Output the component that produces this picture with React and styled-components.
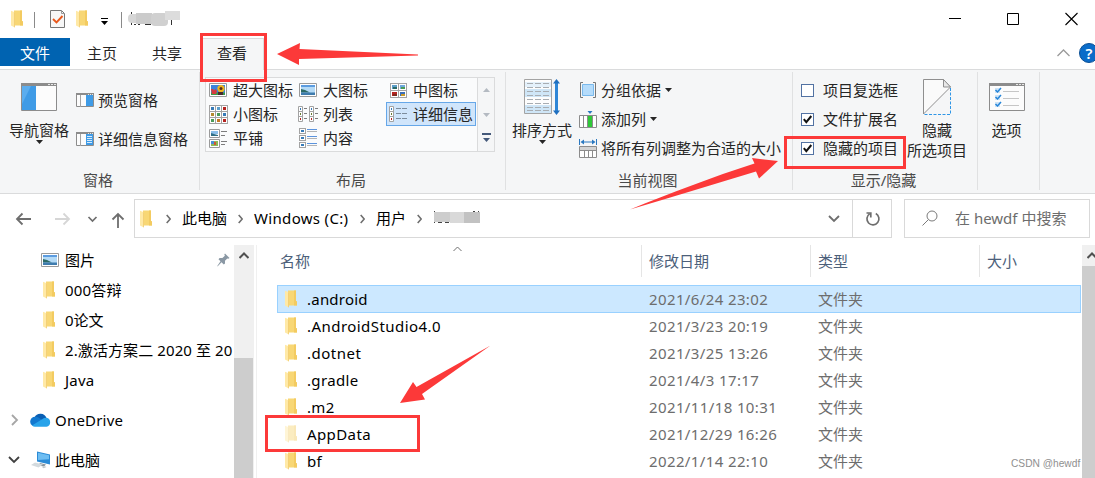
import styled, { createGlobalStyle, css } from 'styled-components';

const GlobalStyle = createGlobalStyle`
  * {
    box-sizing: border-box;
  }

  body {
    margin: 0;
    background: #fff;
    overflow: hidden;
  }

  svg {
    display: block;
    flex: none;
  }
`;

const Window = styled.div`
  position: relative;
  width: 1095px;
  height: 478px;
  overflow: hidden;
  display: flex;
  flex-direction: column;
  background: #fff;
  color: #000;
  font-family: 'Noto Sans', 'Noto Sans CJK SC', sans-serif;
  font-size: 15px;
  line-height: 20px;
  white-space: nowrap;
`;

/* ---------- title bar ---------- */

const TitleBar = styled.header`
  height: 38px;
  flex: none;
  display: flex;
  justify-content: space-between;
`;

const QuickAccess = styled.div`
  display: flex;
  align-items: center;
  padding-left: 11px;
`;

const TitleRule = styled.i`
  width: 1px;
  height: 16px;
  margin: 1px ${(p) => p.$right}px 0 ${(p) => p.$left}px;
  background: #8a8a8a;
`;

const QuickFolder = styled.span`
  margin: 0 13px 0 11px;
`;

const QuickCaret = styled.span`
  margin: 5px 13px 0 0;
`;

const WindowButtons = styled.div`
  display: flex;
  gap: 45px;
  padding: 12px 17px 0 0;
`;

/* ---------- tabs ---------- */

const TabBar = styled.nav`
  height: 32px;
  flex: none;
  display: flex;
  border-bottom: 1px solid #dadbdc;
`;

const Tab = styled.div`
  width: ${(p) => p.$width}px;
  height: 28px;
  padding-top: 1px;
  display: flex;
  align-items: center;
  justify-content: center;
  color: #262626;

  ${(p) => p.$file && css`
    background: #0063b1;
    color: #fff;
  `}

  ${(p) => p.$active && css`
    height: 32px;
    padding-bottom: 4px;
    background: #f5f6f7;
    border: 1px solid #dadbdc;
    border-bottom: 0;
  `}
`;

const TabTools = styled.div`
  margin-left: auto;
  margin-right: -4px;
  padding-bottom: 1px;
  display: flex;
  align-items: center;
  gap: 9px;
`;

/* ---------- ribbon ---------- */

const Ribbon = styled.section`
  height: 124px;
  flex: none;
  display: flex;
  background: #f5f6f7;
  border-bottom: 1px solid #dadbdc;
  color: #262626;
`;

const Group = styled.div`
  width: ${(p) => p.$width}px;
  height: 118px;
  margin-top: 2px;
  display: flex;
  flex-direction: column;
  border-right: 1px solid #e0e1e2;
`;

const GroupBody = styled.div`
  height: 98px;
  display: flex;
  align-items: flex-start;
  padding-left: ${(p) => p.$left}px;
`;

const GroupLabel = styled.div`
  text-align: center;
  padding-right: 3px;
  color: #4a4a4a;
`;

const BigButton = styled.div`
  width: ${(p) => p.$width || 60}px;
  height: 90px;
  margin-left: ${(p) => p.$left || 0}px;
  display: flex;
  flex-direction: column;
  align-items: center;
`;

const BigIcon = styled.div`
  height: 48px;
  display: flex;
  padding-top: ${(p) => p.$top}px;
`;

const Stack = styled.div`
  display: flex;
  flex-direction: column;
  gap: ${(p) => p.$gap}px;
  margin-left: ${(p) => p.$left}px;
  padding-top: ${(p) => p.$top}px;
`;

const Command = styled.div`
  height: 20px;
  display: flex;
  align-items: center;
  gap: 4px;
`;

const Gallery = styled.div`
  display: flex;
  width: 291px;
  height: 75px;
  margin-top: 5px;
`;

const GalleryGrid = styled.div`
  width: 272px;
  display: grid;
  grid-template-columns: 90px 90px 90px;
  grid-auto-rows: 24px;
  background: #fafbfc;
  border: 1px solid #dadbdc;
  border-right: 0;
`;

const GalleryItem = styled.div`
  display: flex;
  align-items: center;
  gap: 6px;
  padding-left: 2px;
  border: 1px solid ${(p) => (p.$selected ? '#66a7e8' : 'transparent')};
  background: ${(p) => (p.$selected ? '#d0e5fb' : 'transparent')};
`;

const IconSlot = styled.span`
  width: 18px;
  height: 20px;
  display: flex;
  align-items: center;
  justify-content: center;
`;

const GallerySpin = styled.div`
  width: 18px;
  border: 1px solid #dadbdc;
`;

const CheckRow = styled.label`
  display: flex;
  align-items: center;
  gap: 9px;
  height: 20px;
`;

const CheckBox = styled.span`
  width: 13px;
  height: 13px;
  border: 1px solid #5272a3;
  background: #fff;
`;

/* ---------- address row ---------- */

const AddressRow = styled.div`
  height: 51px;
  flex: none;
  padding-top: 5px;
  display: flex;
`;

const NavButtons = styled.div`
  width: 134px;
  height: 39px;
`;

const AddressBox = styled.div`
  width: 758px;
  height: 39px;
  display: flex;
  align-items: center;
  border: 1px solid #d9d9d9;
  padding-left: 5px;
`;

const BoxFolder = styled.span`
  margin-right: 14px;
`;

const Crumb = styled.span`
  width: ${(p) => p.$width}px;
  margin: 0 11px;
  padding-bottom: 1px;
  letter-spacing: ${(p) => p.$spacing || 0}px;
`;

const RefreshCell = styled.div`
  width: 39px;
  height: 37px;
  border-left: 1px solid #d9d9d9;
  padding: 11px 0 0 12px;
`;

const DropCell = styled.div`
  margin-left: auto;
  margin-right: 12px;
`;

const SearchBox = styled.div`
  width: 186px;
  height: 39px;
  margin-left: 12px;
  padding: 0 0 1px 17px;
  display: flex;
  align-items: center;
  gap: 17px;
  border: 1px solid #d9d9d9;
  color: #6d6d6d;
`;

/* ---------- body ---------- */

const Body = styled.main`
  flex: 1;
  display: flex;
  min-height: 0;
`;

const Sidebar = styled.aside`
  width: 234px;
  flex: none;
`;

const TreeRow = styled.div`
  height: 30px;
  margin-top: ${(p) => p.$top || 0}px;
  padding-left: ${(p) => p.$left}px;
  display: flex;
  align-items: center;
  letter-spacing: ${(p) => p.$spacing || 0}px;
`;

const TreeIcon = styled.span`
  width: ${(p) => p.$width}px;
  flex: none;
  display: flex;
`;

const Pin = styled.span`
  margin-left: auto;
  margin-right: 4px;
`;

const Scroll = styled.div`
  width: ${(p) => p.$width}px;
  flex: none;
  height: 100%;
  display: flex;
  flex-direction: column;
  background: #f0f0f0;
`;

const ScrollHead = styled.div`
  height: ${(p) => p.$height}px;
  padding: 7px 0 0 ${(p) => p.$left}px;
`;

const Thumb = styled.div`
  flex: 1;
  margin-right: ${(p) => p.$right || 0}px;
  background: #cdcdcd;
`;

const Files = styled.section`
  width: 826px;
  margin-left: 2px;
  border-left: 1px solid #f0f0f0;
  padding-left: 20px;
`;

const columns = css`
  display: grid;
  grid-template-columns: 365px 169px 169px 1fr;
`;

const HeaderRow = styled.div`
  ${columns}
  height: 32px;
  margin-bottom: 8px;
  color: #4c607a;
`;

const HeaderCell = styled.div`
  border-right: ${(p) => (p.$last ? 0 : 1)}px solid #e5e5e5;
  padding: 6px 0 0 ${(p) => p.$left}px;
  position: relative;
`;

const SortMark = styled.span`
  position: absolute;
  left: 176px;
  top: 1px;
`;

const FileRow = styled.div`
  ${columns}
  width: 804px;
  height: 27px;
  align-items: center;
  color: #6d6d6d;

  ${(p) => p.$selected && css`
    height: 28px;
    margin-bottom: -1px;
    background: #cce8ff;
    box-shadow: inset 0 0 0 1px #99d1ff;
  `}
`;

const FileName = styled.div`
  display: flex;
  align-items: center;
  gap: 10px;
  padding-left: 8px;
  color: #000;
  letter-spacing: ${(p) => p.$spacing}px;
`;

const Cell = styled.div`
  padding-left: 7px;
  letter-spacing: ${(p) => p.$spacing || 0}px;
`;

const Watermark = styled.div`
  position: absolute;
  left: 1011px;
  top: 456px;
  font: 10.2px/16px 'Liberation Sans', sans-serif;
  color: #8f8f8f;
`;

const Mark = styled.div`
  position: absolute;
  left: ${(p) => p.$x}px;
  top: ${(p) => p.$y}px;
  width: ${(p) => p.$w}px;
  height: ${(p) => p.$h}px;
  border: 3px solid #fc3939;
`;

const Arrows = styled.svg`
  position: absolute;
  left: 0;
  top: 0;
`;

/* ---------- icons ---------- */

const FolderIcon = ({ faded }) => (
  <svg width="12" height="18" viewBox="0 0 12 18" opacity={faded ? 0.45 : 1}>
    <path d="M3 0.5h8v10.5l1 .5v4H3z" fill="#f8d775" />
    <path d="M9 0.5h2v10.5l1 .5v4H9z" fill="#f3cb61" />
    <path d="M0 .8l3.8 1.4v15.3L0 15.6z" fill="#ffe9a6" />
    <path d="M3.3 2.2h.7v15h-.7z" fill="#eec868" />
  </svg>
);

const Chevron = ({ d, w, h, color = '#6e6e6e', sw = 1.6 }) => (
  <svg width={w} height={h} viewBox={`0 0 ${w} ${h}`} fill="none" stroke={color} strokeWidth={sw}>
    <path d={d} />
  </svg>
);

const CrumbArrow = () => <Chevron w={5} h={10} d="M.7 1l3.5 4L.7 9" />;

const Caret = () => (
  <svg width="7" height="4" viewBox="0 0 7 4">
    <path d="M0 0h7L3.5 4z" fill="#262626" />
  </svg>
);

const NavPaneIcon = () => (
  <svg width="36" height="28" viewBox="0 0 36 28">
    <path d="M.5.5h35v27H.5z" fill="#fcfcfc" stroke="#8c8c8c" />
    <path d="M0 0h36v3H0z" fill="#8c8c8c" />
    <path d="M27 1h2v1h-2zM30 1h2v1h-2zM33 1h2v1h-2z" fill="#e8e8e8" />
    <path d="M1 3h14v24H1z" fill="#3f9be6" />
    <path d="M1 3h9L1 21z" fill="#5badee" />
  </svg>
);

const PaneIcon = ({ details }) => (
  <svg width="18" height="14" viewBox="0 0 18 14">
    <path d="M.5.5h17v13H.5z" fill="#fcfcfc" stroke="#8c8c8c" />
    <path d="M0 0h18v2H0z" fill="#8c8c8c" />
    <path d="M12 1h1v1h-1zM14 1h1v1h-1zM16 1h1v1h-1z" fill="#e8e8e8" />
    <path d="M4.5 2v12" stroke="#a4a4a4" />
    <path d="M10 2h7v11h-7z" fill="#3f9be6" />
    {details && <path d="M11 4.5h5M11 6.5h5M11 8.5h5M11 10.5h5" stroke="#e6f3fd" strokeWidth=".9" />}
  </svg>
);

const PictureIcon = () => (
  <svg width="18" height="14" viewBox="0 0 18 14">
    <path d="M.5.5h17v13H.5z" fill="#fff" stroke="#9a9a9a" />
    <path d="M2 2h14v10H2z" fill="#b4daf6" />
    <path d="M2 2h14v2H2z" fill="#5c9ce0" />
    <path d="M2 6l4 1 5 2.500H2z" fill="#2c6a66" />
    <path d="M2 9.500h14V12H2z" fill="#3f7cae" />
  </svg>
);

const ExtraLargeIcon = () => (
  <svg width="18" height="14" viewBox="0 0 18 14">
    <path d="M.5.5h17v13H.5z" fill="#fff" stroke="#9a9a9a" />
    <path d="M2 2h14v10H2z" fill="#3c83dc" />
    <path d="M2 9.5h14V12H2z" fill="#3c9a48" />
    <circle cx="12" cy="5.6" r="3.6" fill="#f0b51d" />
    <circle cx="12" cy="5.6" r="1.5" fill="#532c1a" />
    <path d="M2 6h2l1 1.5L6.5 6 8 8l-1 3H3z" fill="#d83a3c" />
    <path d="M9 9h5v3H9z" fill="#472a30" />
  </svg>
);

/* small framed thumbnails used by the icon layouts */
const thumbColors = ['#377bb8', '#5c9ec9', '#b52320', '#b38a2e', '#4a9b58', '#377bb8', '#4a9b58', '#c47721', '#b52320'];
const mediumColors = ['#5c9ec9', '#6fa8dd', '#b52320', '#3c6fb8'];
const mediumAccents = ['#2c6a66', '#4a9b58', '#7d2a1e', '#c99a2a'];

const MediumIcon = () => (
  <svg width="17" height="15" viewBox="0 0 17 15">
    {mediumColors.map((color, i) => {
      const x = (i % 2) * 8;
      const y = Math.floor(i / 2) * 7;
      return (
        <g key={color}>
          <rect x={x + 0.5} y={y + 0.5} width="8" height="7" fill="#fff" stroke="#a3a3a3" />
          <rect x={x + 2} y={y + 2} width="5" height="4" fill={color} />
          <rect x={x + 3} y={y + 4} width="4" height="2" fill={mediumAccents[i]} />
        </g>
      );
    })}
  </svg>
);

const SmallIcon = () => (
  <svg width="19" height="19" viewBox="0 0 19 19">
    {thumbColors.map((color, i) => {
      const x = (i % 3) * 6;
      const y = Math.floor(i / 3) * 6;
      return (
        <g key={i}>
          <rect x={x + 0.5} y={y + 0.5} width="6" height="6" fill="#fff" stroke="#a3a3a3" />
          <rect x={x + 2} y={y + 2} width="3" height="3" fill={color} />
        </g>
      );
    })}
  </svg>
);

const DotColumn = ({ x }) => (
  <g>
    <path d={`M${x + 0.5}.5h4v15h-4zM${x} 5.5h5M${x} 10.5h5`} fill="#fff" stroke="#a3a3a3" />
    <path d={`M${x + 2} 2h1v2h-1z`} fill="#377bb8" />
    <path d={`M${x + 2} 7h1v2h-1z`} fill="#6b7d33" />
    <path d={`M${x + 2} 12h1v2h-1z`} fill="#b52320" />
  </g>
);

const ListIcon = () => (
  <svg width="20" height="16" viewBox="0 0 20 16">
    <DotColumn x={0} />
    <DotColumn x={11} />
    <path d="M6 2.500h3M6 7.500h3M6 12.500h3M17 2.500h3M17 7.500h3M17 12.500h3" stroke="#7d7d7d" />
  </svg>
);

const DetailsIcon = () => (
  <svg width="18" height="16" viewBox="0 0 18 16">
    <DotColumn x={0} />
    <path d="M7 2.500h5M13 2.500h5M7 7.500h5M13 7.500h5M7 12.500h5M13 12.500h5" stroke="#7d8c9c" />
  </svg>
);

const TilesIcon = () => (
  <svg width="18" height="19" viewBox="0 0 18 19">
    <path d="M.5.5h10v8H.5zM.5 10.5h10v8H.5z" fill="#fff" stroke="#9a9a9a" />
    <path d="M2 2h7v3H2z" fill="#8bbfea" />
    <path d="M2 4l3 1 4 1v1H2z" fill="#2f6f86" />
    <path d="M2 12h7v5H2z" fill="#8cba58" />
    <path d="M2 12h3v3H2z" fill="#4a8fd8" />
    <path d="M5 13h2v3H5z" fill="#cf5936" />
    <path d="M12 2.5h6M12 6.5h4M12 12.5h6M12 15.5h4" stroke="#7d7d7d" />
  </svg>
);

const ContentIcon = () => (
  <svg width="18" height="20" viewBox="0 0 18 20">
    {[0, 7, 14].map((y) => (
      <g key={y}>
        <rect x=".5" y={y + 0.5} width="6" height="5" fill="#fff" stroke="#a3a3a3" />
        <rect x="2" y={y + 2} width="3" height="2" fill="#377bb8" />
        <path d={`M8 ${y + 1.5}h10`} stroke="#5b93dd" />
        <path d={`M8 ${y + 3.5}h10`} stroke="#b4b4b4" />
      </g>
    ))}
  </svg>
);

const SortIcon = () => (
  <svg width="36" height="36" viewBox="0 0 36 36">
    <path d="M.5.5h27v34H.5z" fill="#fdfdfd" stroke="#a3a3a3" />
    <path d="M1 10h26v8H1zM1 26h26v8H1z" fill="#cfe6f7" />
    <path d="M1 3h26v5H1z" fill="#e4f1fb" />
    {[4, 8, 12, 16, 20, 24, 28, 31].map((y) => (
      <path key={y} d={`M3 ${y + 0.5}h6M11 ${y + 0.5}h6M19 ${y + 0.5}h6`} stroke="#a8adb2" />
    ))}
    <path d="M32.5 3v30" stroke="#2f86d6" strokeWidth="3" />
    <path d="M29 4.5L32.5 0 36 4.5zM29 31.5l3.5 4.5 3.5-4.5z" fill="#1f6fbf" />
  </svg>
);

const GroupByIcon = () => (
  <svg width="18" height="16" viewBox="0 0 18 16">
    <path d="M4 .5H1.5v15H4M14 .5h2.500v15H14" fill="none" stroke="#777" />
    <path d="M3.500 2.500h11v11h-11z" fill="#b5dcfb" stroke="#79b9ec" />
  </svg>
);

const AddColumnIcon = () => (
  <svg width="18" height="17" viewBox="0 0 18 17">
    <path d="M.5 4.500h17v12H.5zM4.500 4v13M8.500 4v13M13.500 4v13" fill="#fff" stroke="#8c8c8c" />
    <path d="M9 5h4v11H9z" fill="#2fc838" />
    <path d="M8.500 0h5L11 3z" fill="#2a78c0" />
  </svg>
);

const FitColumnsIcon = () => (
  <svg width="18" height="19" viewBox="0 0 18 19">
    <path d="M.5 0v6M17.500 0v6M3 3h12" stroke="#2a78c0" />
    <path d="M1.500 3L5 .4v5.200zM16.500 3L13 .4v5.200z" fill="#2a78c0" />
    <path d="M.5 7.500h17v11H.5zM5.500 11v8M9.500 11v8M13.500 11v8" fill="#fff" stroke="#8c8c8c" />
    <path d="M1 8h16v3H1z" fill="#d2d2d2" />
    <path d="M0 11.500h18" stroke="#8c8c8c" />
  </svg>
);

const HideIcon = () => (
  <svg width="28" height="36" viewBox="0 0 28 36">
    <path d="M.5.5h20l7 7.500L.5 35z" fill="#fafafa" stroke="#8f8f8f" />
    <path d="M20.500.5v7.500h7z" fill="#e8e8e8" stroke="#8f8f8f" />
    <path d="M27.500 9v26.500H1" fill="none" stroke="#2f96e6" strokeDasharray="3 1.500" />
  </svg>
);

const OptionsIcon = () => (
  <svg width="36" height="28" viewBox="0 0 36 28">
    <path d="M.5.5h35v27H.5z" fill="#fcfcfc" stroke="#8c8c8c" />
    <path d="M0 0h36v3H0z" fill="#8c8c8c" />
    <path d="M27 1h2v1h-2zM30 1h2v1h-2zM33 1h2v1h-2z" fill="#e8e8e8" />
    {[5, 12, 19].map((y) => (
      <g key={y}>
        <rect x="6" y={y} width="5" height="5" fill="#cfe4f6" />
        <path d={`M6.500 ${y + 2}l2 2 3.500-4`} fill="none" stroke="#2585d8" strokeWidth="1.500" />
        <path d={`M14 ${y + 3.500}h16`} stroke="#c6c6c6" />
      </g>
    ))}
  </svg>
);

const CheckIcon = () => (
  <svg width="11" height="11" viewBox="0 0 11 11">
    <path d="M1.800 5.200l2.500 3 5-6.200" fill="none" stroke="#111" strokeWidth="2" />
  </svg>
);

const DocCheckIcon = () => (
  <svg width="15" height="18" viewBox="0 0 15 18">
    <path d="M.5.5h11l3 3v14H.5z" fill="#f7f7f7" stroke="#777" />
    <path d="M11.500.5v3h3" fill="none" stroke="#999" />
    <path d="M3 9l3.500 3.500L12.500 6" fill="none" stroke="#e8581c" strokeWidth="1.900" />
  </svg>
);

/* pixelated user name */
const TitleMosaic = () => (
  <svg width="54" height="17" viewBox="0 0 54 17">
    <path d="M3 1h1v2h-1zM3 11h1v3h-1z" fill="#333" />
    <path d="M6 13h2v1h-2zM10 13h2v1h-2zM17 13h6v1h-6zM43 8h1v6h-1z" fill="#333" />
    <rect x="0" y="3" width="14" height="9" rx="4" fill="#d6d6d6" />
    <rect x="8" y="2" width="16" height="11" fill="#cbcbcb" />
    <rect x="23" y="2" width="17" height="13" rx="4" fill="#d0d0d0" />
    <rect x="37" y="0" width="15" height="9" fill="#dcdcdc" />
  </svg>
);

const CrumbMosaic = () => (
  <svg width="48" height="14" viewBox="0 0 48 14">
    <path d="M1 0h1v2H1zM1 10h1v2H1zM5 11h4v1H5zM12 11h4v1h-4zM40 0h2v1h-2zM45 0h1v2h-1z" fill="#444" />
    <rect x="1" y="1" width="18" height="10" fill="#cdcdcd" />
    <rect x="17" y="1" width="15" height="11" fill="#d9d9d9" />
    <rect x="31" y="1" width="16" height="11" fill="#c2c2c2" />
  </svg>
);

const NavArrows = () => (
  <svg width="134" height="39" viewBox="0 0 134 39" fill="none" stroke="#6e6e6e" strokeWidth="1.800">
    <path d="M31 20H17M22.500 14.500L17 20l5.500 5.500" />
    <path d="M55 20h14M63.500 14.500L69 20l-5.500 5.500" stroke="#d6d6d6" />
    <path d="M88.500 18l4 4 4-4" strokeWidth="1.700" />
    <path d="M118 29V15M112.500 20.500L118 15l5.500 5.500" />
  </svg>
);

const RefreshIcon = () => (
  <svg width="16" height="16" viewBox="0 0 16 16" fill="none" stroke="#6e6e6e" strokeWidth="1.700">
    <path d="M10.800 2.600a6 6 0 1 1-6.200.3M1.500 2h4.300v4.500" />
  </svg>
);

const SearchIcon = () => (
  <svg width="16" height="16" viewBox="0 0 16 16" fill="none" stroke="#7a7a7a">
    <circle cx="10" cy="6" r="5" />
    <path d="M6.300 9.700L.5 15.500" />
  </svg>
);

const PinIcon = () => (
  <svg width="13" height="14" viewBox="0 0 13 14">
    <path d="M8 .5L12.500 5l-1.200.8-1-.3L8 7.800v2.700L6.800 11.600 4.500 9.300.5 13.500l-.2-.4L3.500 8.300 1.500 6.200 2.600 5h2.800l2.500-2.200-.6-1.200z" fill="#8a98a4" />
  </svg>
);

const OneDriveIcon = () => (
  <svg width="21" height="14" viewBox="0 0 21 14">
    <path d="M4.500 4.500A6.500 6.500 0 0 1 16.500 5L10 9z" fill="#0a5fb4" />
    <path d="M5 3.700a5 5 0 0 0-2.600 9.100L13 7.500 8.500 4.500A5 5 0 0 0 5 3.700z" fill="#1278cf" />
    <path d="M16.500 4.700a4.600 4.600 0 0 1 0 9H5a5 5 0 0 1-3-1.300L12.500 6a5 5 0 0 1 4-1.300z" fill="#28a3ea" />
  </svg>
);

const ComputerIcon = () => (
  <svg width="20" height="18" viewBox="0 0 20 18">
    <path d="M6 .5l13 3v10l-13-3z" fill="#2b8bd6" />
    <path d="M7 1.800l11 2.500v4L7 9z" fill="#6dbdf2" />
    <path d="M9 12l6 1.500-2 2-6-1z" fill="#8a959d" />
    <path d="M0 14l4-2.500 8 2L7.500 16.500z" fill="#d3dade" />
    <path d="M11 16l3-.8 1.500.8-3 1.200z" fill="#bfc8cd" />
  </svg>
);

const HelpIcon = () => (
  <svg width="20" height="20" viewBox="0 0 20 20">
    <circle cx="10" cy="10" r="9.500" fill="#0a6cc9" stroke="#0b4f94" />
    <text x="10" y="15.500" textAnchor="middle" fill="#fff" fontSize="15" fontWeight="600">?</text>
  </svg>
);

/* ---------- data ---------- */

const layouts = [
  { name: '超大图标', icon: <ExtraLargeIcon /> },
  { name: '大图标', icon: <PictureIcon /> },
  { name: '中图标', icon: <MediumIcon /> },
  { name: '小图标', icon: <SmallIcon /> },
  { name: '列表', icon: <ListIcon /> },
  { name: '详细信息', icon: <DetailsIcon />, selected: true },
  { name: '平铺', icon: <TilesIcon /> },
  { name: '内容', icon: <ContentIcon /> },
];

const folders = [
  { name: '000答辩', spacing: 0.2 },
  { name: '0论文' },
  { name: '2.激活方案二 2020 至 20', spacing: 0.1 },
  { name: 'Java', spacing: 0.2 },
];

const files = [
  { name: '.android', date: '2021/6/24 23:02', spacing: 0.22, selected: true },
  { name: '.AndroidStudio4.0', date: '2021/3/23 20:19', spacing: 0.45 },
  { name: '.dotnet', date: '2021/3/25 13:26', spacing: 0.5 },
  { name: '.gradle', date: '2021/4/3 17:17', spacing: 0.35 },
  { name: '.m2', date: '2021/11/18 10:31', spacing: 0.35 },
  { name: 'AppData', date: '2021/12/29 16:26', spacing: 0.4, hidden: true },
  { name: 'bf', date: '2022/1/14 22:10', spacing: 0.3 },
];

const options = [
  { name: '项目复选框', checked: false },
  { name: '文件扩展名', checked: true },
  { name: '隐藏的项目', checked: true },
];

function RibbonPanel() {
  return (
    <Ribbon>
      <Group $width={200}>
        <GroupBody $left={8}>
          <BigButton $width={62}>
            <BigIcon $top={11}><NavPaneIcon /></BigIcon>
            导航窗格
            <Caret />
          </BigButton>
          <Stack $left={6} $top={18} $gap={19}>
            <Command><PaneIcon />预览窗格</Command>
            <Command><PaneIcon details />详细信息窗格</Command>
          </Stack>
        </GroupBody>
        <GroupLabel>窗格</GroupLabel>
      </Group>

      <Group $width={306}>
        <GroupBody $left={5}>
          <Gallery>
            <GalleryGrid>
              {layouts.map((item) => (
                <GalleryItem key={item.name} $selected={item.selected}>
                  <IconSlot>{item.icon}</IconSlot>
                  {item.name}
                </GalleryItem>
              ))}
            </GalleryGrid>
            <GallerySpin>
              <svg width="16" height="73" viewBox="0 0 16 73">
                <path d="M5 14h7L8.500 10z" fill="#b4bac2" />
                <path d="M5 35h7l-3.500 4z" fill="#b4bac2" />
                <path d="M4 55h9v2H4zM5 60h7l-3.500 4z" fill="#44597a" />
              </svg>
            </GallerySpin>
          </Gallery>
        </GroupBody>
        <GroupLabel>布局</GroupLabel>
      </Group>

      <Group $width={287}>
        <GroupBody $left={6}>
          <BigButton>
            <BigIcon $top={7}><SortIcon /></BigIcon>
            排序方式
            <Caret />
          </BigButton>
          <Stack $left={7} $top={8} $gap={9}>
            <Command><GroupByIcon />分组依据<Caret /></Command>
            <Command><AddColumnIcon />添加列<Caret /></Command>
            <Command><FitColumnsIcon />将所有列调整为合适的大小</Command>
          </Stack>
        </GroupBody>
        <GroupLabel>当前视图</GroupLabel>
      </Group>

      <Group $width={185}>
        <GroupBody $left={8}>
          <Stack $left={0} $top={8} $gap={9}>
            {options.map((o) => (
              <CheckRow key={o.name}>
                <CheckBox>{o.checked && <CheckIcon />}</CheckBox>
                {o.name}
              </CheckRow>
            ))}
          </Stack>
          <BigButton $left={9}>
            <BigIcon $top={7}><HideIcon /></BigIcon>
            <span>隐藏</span>
            <span>所选项目</span>
          </BigButton>
        </GroupBody>
        <GroupLabel>显示/隐藏</GroupLabel>
      </Group>

      <Group $width={62}>
        <GroupBody $left={0}>
          <BigButton $width={57}>
            <BigIcon $top={11}><OptionsIcon /></BigIcon>
            选项
          </BigButton>
        </GroupBody>
      </Group>
    </Ribbon>
  );
}

function NavigationTree() {
  return (
    <Sidebar>
      <TreeRow $left={41}>
        <TreeIcon $width={24}><PictureIcon /></TreeIcon>
        图片
        <Pin><PinIcon /></Pin>
      </TreeRow>
      {folders.map((f) => (
        <TreeRow key={f.name} $left={43} $spacing={f.spacing}>
          <TreeIcon $width={22}><FolderIcon /></TreeIcon>
          {f.name}
        </TreeRow>
      ))}
      <TreeRow $left={11} $top={10} $spacing={0.2}>
        <TreeIcon $width={19}><Chevron w={8} h={12} d="M1 1l5 5-5 5" color="#a6a6a6" sw={1.8} /></TreeIcon>
        <TreeIcon $width={25}><OneDriveIcon /></TreeIcon>
        OneDrive
      </TreeRow>
      <TreeRow $left={8} $top={10}>
        <TreeIcon $width={23}><Chevron w={12} h={8} d="M1 1l5 5 5-5" color="#404040" sw={1.8} /></TreeIcon>
        <TreeIcon $width={24}><ComputerIcon /></TreeIcon>
        此电脑
      </TreeRow>
    </Sidebar>
  );
}

function FileList() {
  return (
    <Files>
      <HeaderRow>
        <HeaderCell $left={3}>
          名称
          <SortMark><Chevron w={9} h={6} d="M.5 5l4-4 4 4" sw={1} /></SortMark>
        </HeaderCell>
        <HeaderCell $left={7}>修改日期</HeaderCell>
        <HeaderCell $left={7}>类型</HeaderCell>
        <HeaderCell $left={7} $last>大小</HeaderCell>
      </HeaderRow>
      {files.map((f) => (
        <FileRow key={f.name} $selected={f.selected}>
          <FileName $spacing={f.spacing}>
            <FolderIcon faded={f.hidden} />
            {f.name}
          </FileName>
          <Cell $spacing={0.38}>{f.date}</Cell>
          <Cell>文件夹</Cell>
        </FileRow>
      ))}
    </Files>
  );
}

function App() {
  return (
    <Window>
      <GlobalStyle />

      <TitleBar>
        <QuickAccess>
          <FolderIcon />
          <TitleRule $left={11} $right={15} />
          <DocCheckIcon />
          <QuickFolder><FolderIcon /></QuickFolder>
          <QuickCaret>
            <svg width="7" height="7" viewBox="0 0 7 7">
              <path d="M0 0h7v1H0zM0 3h7L3.500 7z" fill="#000" />
            </svg>
          </QuickCaret>
          <TitleRule $left={0} $right={6} />
          <TitleMosaic />
        </QuickAccess>
        <WindowButtons>
          <Chevron w={13} h={14} d="M0 6.500h12" color="#000" sw={1} />
          <Chevron w={13} h={14} d="M.5 1.500h11v11H.5z" color="#000" sw={1} />
          <Chevron w={13} h={14} d="M.5 1l12 12M12.500 1l-12 12" color="#000" sw={1.1} />
        </WindowButtons>
      </TitleBar>

      <TabBar>
        <Tab $width={70} $file>文件</Tab>
        <Tab $width={64}>主页</Tab>
        <Tab $width={66}>共享</Tab>
        <Tab $width={64} $active>查看</Tab>
        <TabTools>
          <Chevron w={13} h={8} d="M.5 7l6-6 6 6" color="#9a9a9a" sw={1.3} />
          <HelpIcon />
        </TabTools>
      </TabBar>

      <RibbonPanel />

      <AddressRow>
        <NavButtons><NavArrows /></NavButtons>
        <AddressBox>
          <BoxFolder><FolderIcon /></BoxFolder>
          <CrumbArrow />
          <Crumb $width={45}>此电脑</Crumb>
          <CrumbArrow />
          <Crumb $width={95} $spacing={0.33}>Windows (C:)</Crumb>
          <CrumbArrow />
          <Crumb $width={30}>用户</Crumb>
          <CrumbArrow />
          <Crumb $width={48}><CrumbMosaic /></Crumb>
          <DropCell><Chevron w={12} h={8} d="M1 1l5 5 5-5" sw={1.8} /></DropCell>
          <RefreshCell><RefreshIcon /></RefreshCell>
        </AddressBox>
        <SearchBox>
          <SearchIcon />
          在 hewdf 中搜索
        </SearchBox>
      </AddressRow>

      <Body>
        <NavigationTree />
        <Scroll $width={20}>
          <ScrollHead $height={113} $left={5}>
            <Chevron w={10} h={7} d="M.5 6L5 1.500 9.500 6" color="#505050" sw={2} />
          </ScrollHead>
          <Thumb $right={1} />
        </Scroll>
        <FileList />
        <Scroll $width={13}>
          <ScrollHead $height={21} $left={5}>
            <Chevron w={10} h={7} d="M.5 6L5 1.500 9.500 6" color="#505050" sw={2} />
          </ScrollHead>
          <Thumb />
        </Scroll>
      </Body>

      <Watermark>CSDN @hewdf</Watermark>

      <Mark $x={200} $y={33} $w={67} $h={49} />
      <Mark $x={784} $y={136} $w={122} $h={33} />
      <Mark $x={265} $y={415} $w={155} $h={37} />
      <Arrows width="1095" height="478" viewBox="0 0 1095 478">
        <g fill="#fc3939">
          <path d="M277 54l23-11-.5 6L418 54.500v1L299 59v6z" />
          <path d="M778 161l-26-3 2.500 5.500C712 177 671 193 630 209.500c43-13 84-25 126-38l3 7z" />
          <path d="M400 403l13-21 3.500 5L490.500 345.500 422 394l3 5.500z" />
        </g>
      </Arrows>
    </Window>
  );
}

export default App;
